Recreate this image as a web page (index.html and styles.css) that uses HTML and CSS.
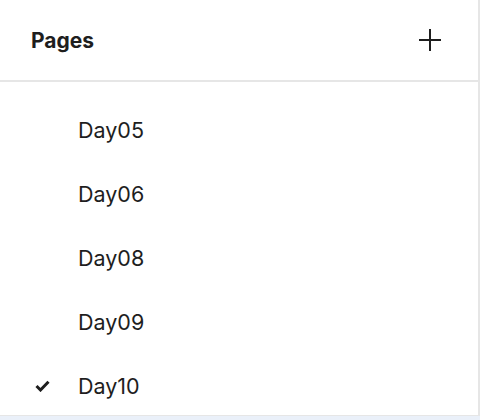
FILE: index.html
```html
<!DOCTYPE html>
<html>
<head>
<meta charset="utf-8">
<link rel="stylesheet" href="styles.css">
</head>
<body>
<div class="panel">
  <div class="header">
    <span class="title">Pages</span>
    <button class="add" aria-label="Add page">
      <svg width="22" height="22" viewBox="0 0 22 22"><path d="M11 0V22M0 11H22" stroke="#1e1e1e" stroke-width="2"/></svg>
    </button>
  </div>
  <ul class="list">
    <li class="item"><span class="check"></span><span class="name">Day05</span></li>
    <li class="item"><span class="check"></span><span class="name">Day06</span></li>
    <li class="item"><span class="check"></span><span class="name">Day08</span></li>
    <li class="item"><span class="check"></span><span class="name">Day09</span></li>
    <li class="item current"><span class="check"><svg width="15" height="12" viewBox="0 0 15 12"><path d="M1.5 6L5.5 10L13.5 1.8" fill="none" stroke="#1e1e1e" stroke-width="3"/></svg></span><span class="name">Day10</span></li>
  </ul>
</div>
</body>
</html>
```
FILE: styles.css
```css
html, body {
  margin: 0;
  padding: 0;
  background: #eaf0f9;
}
body {
  font-family: Inter, "Noto Sans", sans-serif;
  color: #1e1e1e;
  width: 480px;
  height: 420px;
  overflow: hidden;
}
.panel {
  width: 478px;
  height: 415px;
  background: #fff;
  border-right: 2px solid #e6e6e6;
  border-bottom: 1px solid #e6e6e6;
  overflow: hidden;
}
.header {
  height: 80px;
  border-bottom: 2px solid #e6e6e6;
  display: flex;
  align-items: center;
  justify-content: space-between;
  padding: 0 37px 0 31px;
}
.title {
  font-size: 21px;
  font-weight: 700;
}
.add {
  border: 0;
  background: none;
  padding: 0;
  width: 22px;
  height: 22px;
  display: flex;
}
.list {
  list-style: none;
  margin: 0;
  padding: 16px 0 0 0;
}
.item {
  height: 64px;
  display: flex;
  align-items: center;
  font-size: 21.5px;
}
.check {
  width: 78px;
  padding-left: 35px;
  box-sizing: border-box;
  display: flex;
  align-items: center;
}
```
